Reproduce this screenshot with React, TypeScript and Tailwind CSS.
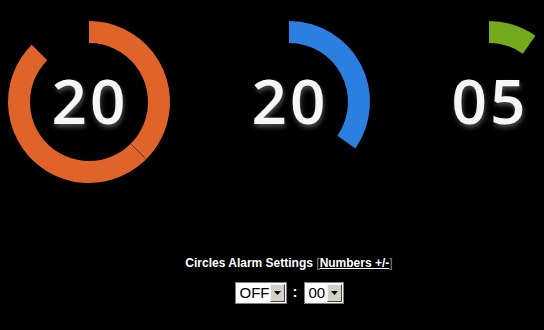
import React from "react"

type Ring = { value: string; color: string; angle: number; seam?: number }

const rings: Ring[] = [
  { value: "20", color: "#e0642a", angle: 315, seam: 135 },
  { value: "20", color: "#2a7fe0", angle: 125 },
  { value: "05", color: "#72aa1c", angle: 35 },
]

function point(cx: number, cy: number, r: number, deg: number) {
  const a = (deg * Math.PI) / 180
  return [cx + r * Math.sin(a), cy - r * Math.cos(a)]
}

function arcPath(cx: number, cy: number, r: number, from: number, to: number) {
  const [x1, y1] = point(cx, cy, r, from)
  const [x2, y2] = point(cx, cy, r, to)
  const large = to - from > 180 ? 1 : 0
  return `M ${x1} ${y1} A ${r} ${r} 0 ${large} 1 ${x2} ${y2}`
}

function Circle({ ring }: { ring: Ring }) {
  const [sx1, sy1] = ring.seam !== undefined ? point(90, 90, 59, ring.seam) : [0, 0]
  const [sx2, sy2] = ring.seam !== undefined ? point(90, 90, 81, ring.seam) : [0, 0]
  return (
    <div className="relative mx-auto h-[180px] w-[180px]">
      <svg width="180" height="180" viewBox="0 0 180 180" className="block">
        <path d={arcPath(90, 90, 70, 0, ring.angle)} fill="none" stroke={ring.color} strokeWidth="22" />
        {ring.seam !== undefined && (
          <line x1={sx1} y1={sy1} x2={sx2} y2={sy2} stroke="#5a2a12" strokeWidth="0.8" />
        )}
      </svg>
      <div className="absolute inset-0 flex items-center justify-center pl-[2px] pb-[4px] font-['Open_Sans',sans-serif] text-[62px] font-semibold leading-none tracking-[3px] text-[#f6f6f6] [text-shadow:1px_3px_5px_rgba(110,110,110,0.7)]">
        {ring.value}
      </div>
    </div>
  )
}

function FakeSelect({ label, width }: { label: string; width: string }) {
  return (
    <div className={`flex h-[22px] ${width} items-stretch border border-[#7f7f7f] bg-white p-[1px]`}>
      <div className="flex flex-1 items-center pl-[3px] font-['Liberation_Sans',Arial,sans-serif] text-[15px] leading-none text-black">
        {label}
      </div>
      <div className="flex w-[15px] items-center justify-center border border-t-[#f2f1ec] border-l-[#f2f1ec] border-b-[#404040] border-r-[#404040] bg-[#d4d0c8]">
        <svg width="7" height="4" viewBox="0 0 7 4">
          <path d="M0 0 H7 L3.5 4 Z" fill="#000" />
        </svg>
      </div>
    </div>
  )
}

export default function App() {
  return (
    <div className="min-h-screen w-full overflow-hidden bg-black">
      <div className="-ml-[11px] w-[600px] pt-[12px]">
        <div className="flex">
          {rings.map((ring, i) => (
            <div key={i} className="w-[200px]">
              <Circle ring={ring} />
            </div>
          ))}
        </div>
        <div className="mt-[64px] text-center font-['Liberation_Sans',Arial,sans-serif] text-[12px] font-bold leading-[14px] text-white">
          Circles Alarm Settings <span className="font-normal text-[#8a8a8a]">[</span>
          <span className="underline">Numbers +/-</span>
          <span className="font-normal text-[#8a8a8a]">]</span>
        </div>
        <div className="mt-[11px] flex items-center justify-center gap-[6px]">
          <FakeSelect label="OFF" width="w-[52px]" />
          <span className="pb-[1px] font-['Liberation_Sans',Arial,sans-serif] text-[15px] font-bold text-white">:</span>
          <FakeSelect label="00" width="w-[40px]" />
        </div>
      </div>
    </div>
  )
}
